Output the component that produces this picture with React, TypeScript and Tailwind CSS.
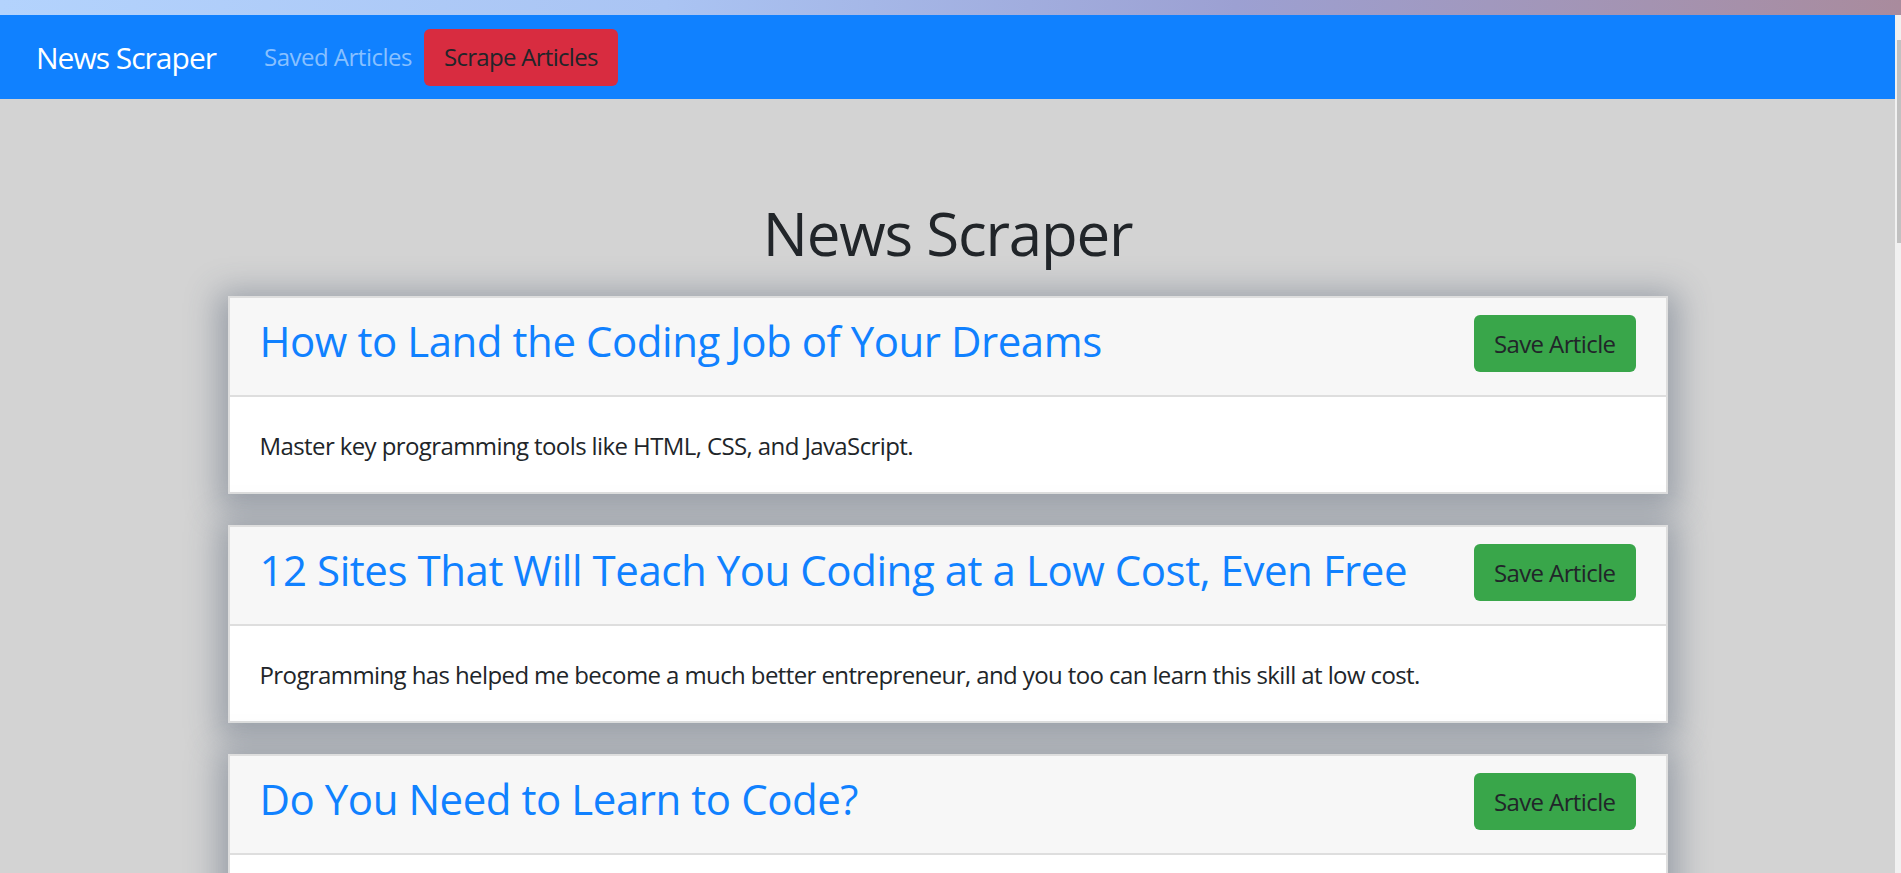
export default function App() {
  const articles = [
    {
      title: "How to Land the Coding Job of Your Dreams",
      summary: "Master key programming tools like HTML, CSS, and JavaScript.",
    },
    {
      title: "12 Sites That Will Teach You Coding at a Low Cost, Even Free",
      summary:
        "Programming has helped me become a much better entrepreneur, and you too can learn this skill at low cost.",
    },
    {
      title: "Do You Need to Learn to Code?",
      summary: "Learning to code can open doors, but it is not the only path forward.",
    },
  ];

  return (
    <div className="h-[873px] overflow-hidden flex flex-col bg-[#d3d3d3] font-['Open_Sans',sans-serif]">
      <div className="h-[15px] shrink-0 bg-[linear-gradient(90deg,#b3d3fd_0%,#aac4f3_35%,#9ca0d2_65%,#a98b9d_100%)]" />
      <div className="flex flex-1 min-h-0">
        <div className="flex-1 min-w-0">
          <nav className="h-[84px] bg-[#1081ff] flex items-center pl-[36px]">
            <span className="text-[30px] leading-[45px] tracking-[-1px] text-white">News Scraper</span>
            <a className="ml-[48px] text-[24px] leading-[36px] tracking-[-0.5px] text-[#88c0ff]">Saved Articles</a>
            <button className="ml-[12px] h-[57px] px-[20px] rounded-[6px] bg-[#d82c40] text-[24px] leading-[36px] tracking-[-0.7px] text-[#212529]">
              Scrape Articles
            </button>
          </nav>
          <main className="flex flex-col items-center">
            <h1 className="mt-[98px] mb-[27px] text-[60px] leading-[72px] tracking-[-1.2px] font-normal text-[#212529]">
              News Scraper
            </h1>
            {articles.map((a) => (
              <div
                key={a.title}
                className="w-[1440px] shrink-0 mb-[31px] bg-white border-2 border-[#dedede] shadow-[0_6px_30px_10px_rgba(60,75,100,0.38)]"
              >
                <div className="flex items-start justify-between bg-[#f7f7f7] border-b-2 border-[#dedede] pt-[17px] pb-[18px] pl-[30px] pr-[30px]">
                  <h3 className="mt-[1px] text-[42px] leading-[50px] mb-[11px] tracking-[-0.45px] font-normal text-[#1081ff]">
                    {a.title}
                  </h3>
                  <button className="h-[57px] px-[20px] rounded-[6px] bg-[#39a64a] text-[24px] leading-[36px] tracking-[-0.6px] text-[#212529]">
                    Save Article
                  </button>
                </div>
                <div className="px-[30px] pt-[31px] pb-[28px] text-[24px] leading-[36px] tracking-[-0.6px] text-[#212529]">
                  {a.summary}
                </div>
              </div>
            ))}
          </main>
        </div>
        <div className="w-[6px] shrink-0 bg-[#f1f1f1] pt-[25px] flex justify-end">
          <div className="w-[4px] h-[203px] bg-[#c1c1c1]" />
        </div>
      </div>
    </div>
  );
}
